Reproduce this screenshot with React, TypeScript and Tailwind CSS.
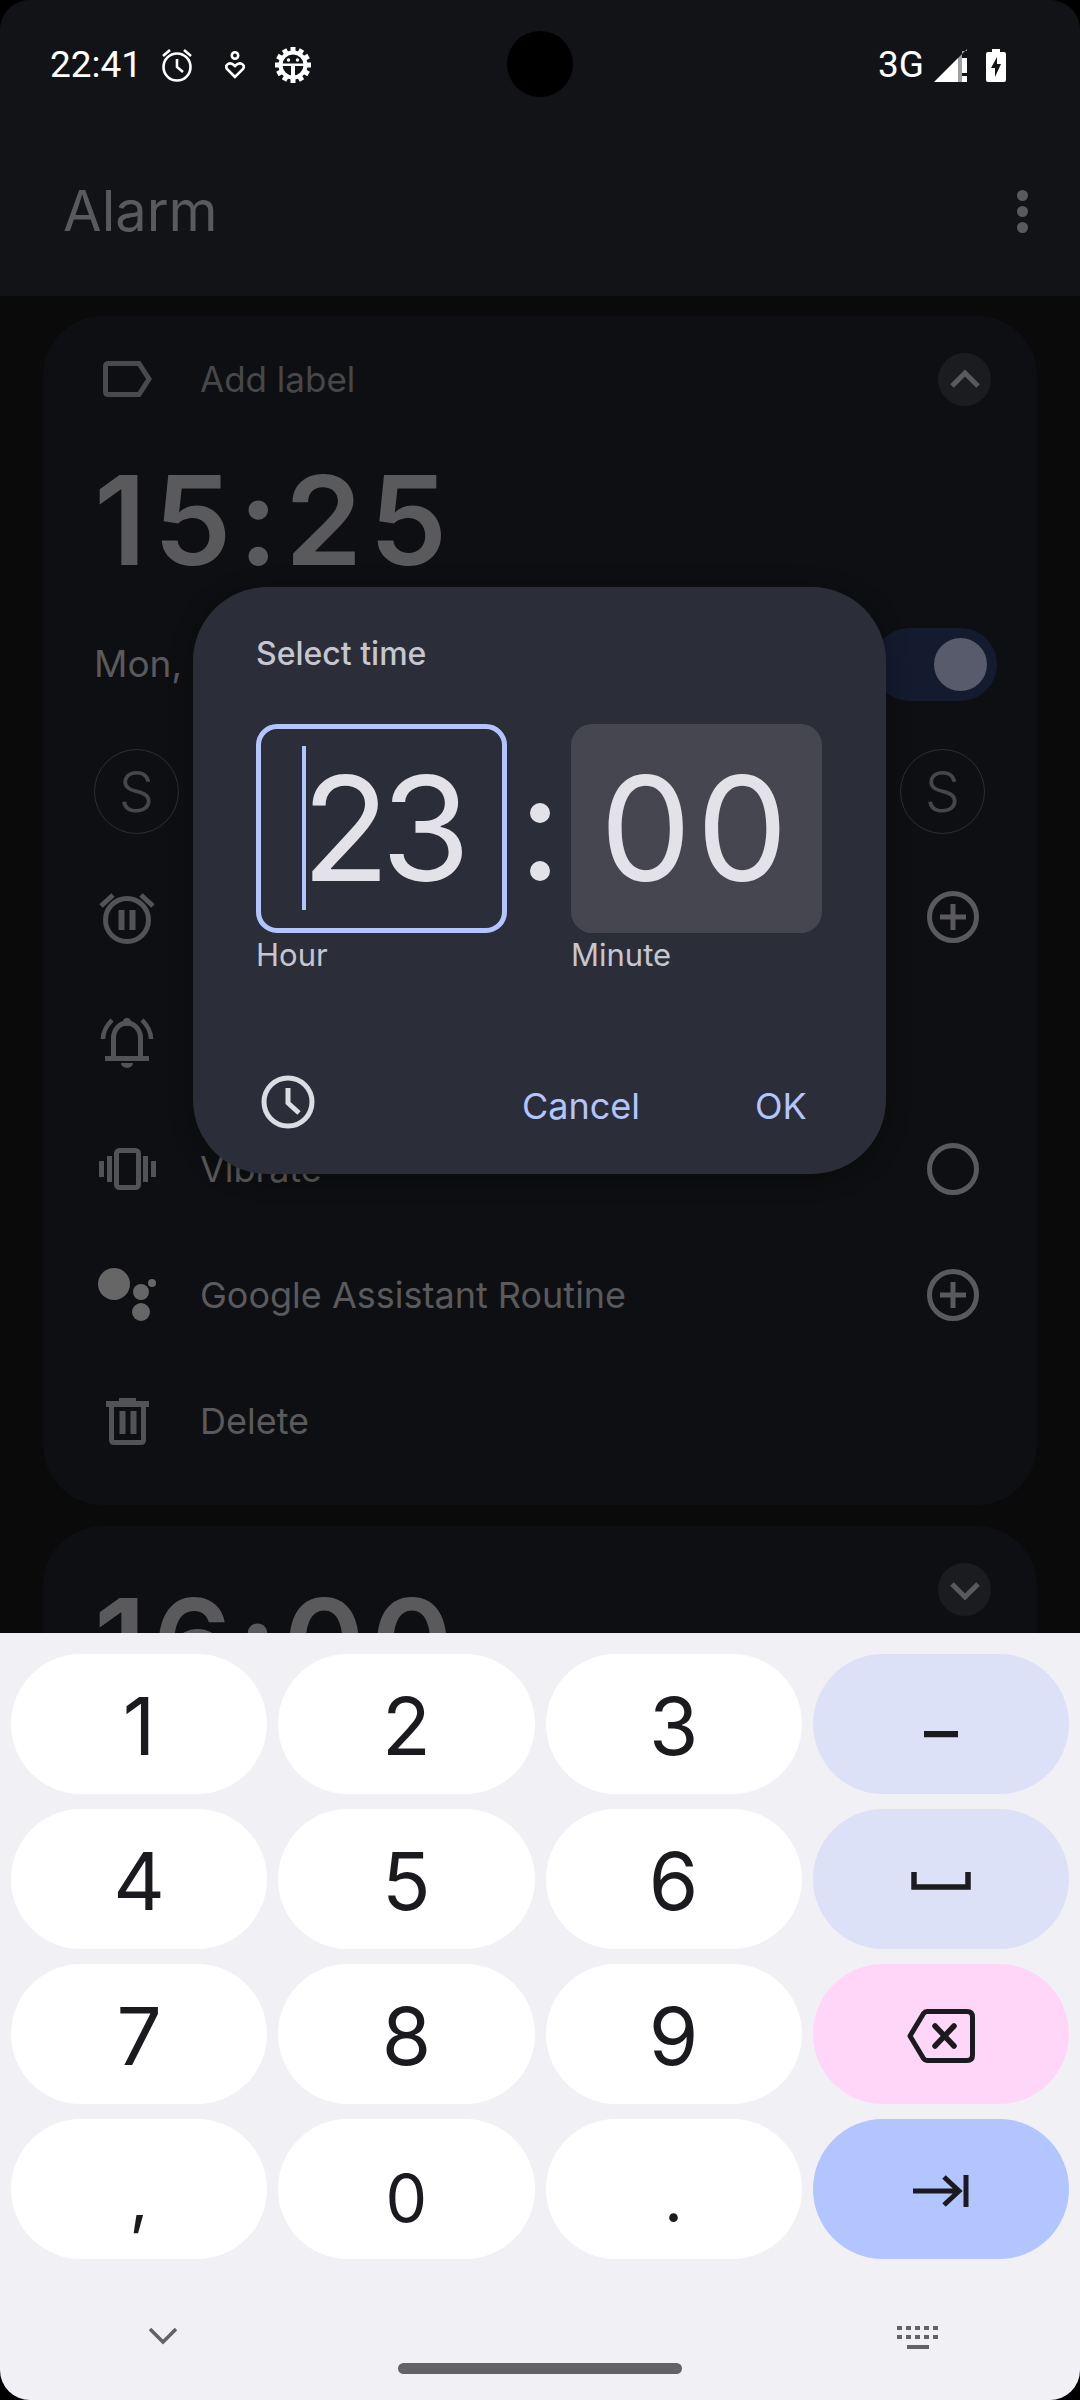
const SANS = "font-['Inter','Liberation_Sans',sans-serif]";

function Chev({ up }: { up?: boolean }) {
  return (
    <div className="w-[53px] h-[53px] rounded-full bg-[#1b1c1f] flex items-center justify-center">
      <svg width="32" height="32" viewBox="0 0 32 32" fill="none" stroke="#5a5a5c" strokeWidth="5">
        <path d={up ? "M3 23 L16 10 L29 23" : "M3 10 L16 23 L29 10"} />
      </svg>
    </div>
  );
}

function Plus() {
  return (
    <svg width="54" height="54" viewBox="0 0 54 54" fill="none" stroke="#5a5a5c" strokeWidth="5">
      <circle cx="27" cy="27" r="23.5" />
      <path d="M27 14V40M14 27H40" />
    </svg>
  );
}

function Row({ icon, text, right }: { icon: React.ReactNode; text?: string; right?: React.ReactNode }) {
  return (
    <div className="h-[126px] flex items-center">
      <div className="w-[106px] flex justify-center pr-[40px] shrink-0">{icon}</div>
      <span className="text-[36px] text-[#5a5a5c] flex-1">{text}</span>
      <div className="w-[60px] shrink-0">{right}</div>
    </div>
  );
}

const Icons = {
  label: (
    <svg width="50" height="36" viewBox="0 0 50 36" fill="none" stroke="#4a4a4c" strokeWidth="5">
      <path d="M2.500 5.500Q2.500 2.500 5.500 2.500H36L46 18L36 33.500H5.500Q2.500 33.500 2.500 30.500Z" />
    </svg>
  ),
  pause: (
    <svg width="56" height="54" viewBox="0 0 56 54" fill="none" stroke="#535357" strokeWidth="5">
      <circle cx="28" cy="30" r="21.500" />
      <path d="M22.500 20V40M33.500 20V40" strokeWidth="6" />
      <path d="M2 16L14 5M54 16L42 5" />
    </svg>
  ),
  bell: (
    <svg width="54" height="50" viewBox="0 0 54 50" fill="none" stroke="#535357" strokeWidth="5">
      <path d="M13.500 38V20a13.500 15 0 0 1 27 0V38" />
      <circle cx="27" cy="4" r="4" fill="#535357" stroke="none" />
      <rect x="5" y="38" width="44" height="5" fill="#535357" stroke="none" />
      <path d="M21 45h12a6 5 0 0 1-12 0z" fill="#535357" stroke="none" />
      <path d="M3 21C3 13 7 7 12 2M51 21C51 13 47 7 42 2" strokeWidth="4.500" />
    </svg>
  ),
  vibrate: (
    <svg width="57" height="42" viewBox="0 0 57 42" fill="#535357">
      <rect x="0" y="13" width="5" height="16" />
      <rect x="8" y="8" width="5" height="26" />
      <rect x="44" y="8" width="5" height="26" />
      <rect x="52" y="13" width="5" height="16" />
      <rect x="17.500" y="2.500" width="22" height="37" rx="3" fill="none" stroke="#535357" strokeWidth="5" />
    </svg>
  ),
  assistant: (
    <svg width="58" height="54" viewBox="0 0 58 54" fill="#666667">
      <circle cx="16" cy="16" r="16" />
      <circle cx="43" cy="24" r="8" />
      <circle cx="54" cy="15" r="4" />
      <circle cx="43" cy="44" r="9" />
    </svg>
  ),
  trash: (
    <svg width="43" height="47" viewBox="0 0 43 47" fill="#535357">
      <rect x="0" y="3" width="43" height="6" />
      <rect x="13" y="0" width="17" height="4" />
      <path d="M5.500 9V42Q5.500 44.500 8 44.500H35Q37.500 44.500 37.500 42V9" fill="none" stroke="#535357" strokeWidth="5" />
      <rect x="13.500" y="13" width="6" height="23" />
      <rect x="24.500" y="13" width="6" height="23" />
    </svg>
  ),
};

function Card1() {
  const days = ["S", "M", "T", "W", "T", "F", "S"];
  return (
    <div className="h-[1189px] rounded-[60px] bg-[#0e0f12] shrink-0 flex flex-col px-[51px]">
      <div className="h-[126px] flex items-center shrink-0">
        <div className="w-[106px] pl-[9px]">{Icons.label}</div>
        <span className="text-[35px] text-[#47474a] flex-1">Add label</span>
        <div className="mr-[-5px]"><Chev up /></div>
      </div>
      <div className="h-[156px] flex items-center shrink-0 text-[124px] leading-none font-semibold text-[#5a5a5c] tracking-[7px]">15:25</div>
      <div className="h-[132px] flex items-center justify-between shrink-0">
        <span className="text-[37px] text-[#5a5a5c]">Mon, Tue, Wed, Thu, Fri</span>
        <div className="w-[124px] h-[73px] rounded-full bg-[#141b2e] flex items-center justify-end pr-[10px] mr-[-11px]">
          <div className="w-[53px] h-[53px] rounded-full bg-[#585b6b]" />
        </div>
      </div>
      <div className="flex justify-between mt-[19px] mb-[20px] shrink-0 mr-[1px]">
        {days.map((d, i) => (
          <div key={i} className="w-[85px] h-[85px] rounded-full border border-[#2e2e2f] flex items-center justify-center text-[56px] font-light text-[#47474a]">{d}</div>
        ))}
      </div>
      <Row icon={Icons.pause} right={<Plus />} />
      <Row icon={Icons.bell} />
      <Row icon={Icons.vibrate} text="Vibrate" right={
        <svg width="54" height="54" viewBox="0 0 54 54" fill="none" stroke="#5a5a5c" strokeWidth="5"><circle cx="27" cy="27" r="23.500" /></svg>
      } />
      <Row icon={Icons.assistant} text="Google Assistant Routine" right={<Plus />} />
      <Row icon={Icons.trash} text="Delete" />
    </div>
  );
}

function Dialog() {
  return (
    <div className="absolute left-[193px] top-[587px] w-[693px] h-[587px] rounded-[74px] bg-[#2b2e38] flex flex-col pl-[63px] pr-[64px] shadow-[0_4px_24px_rgba(0,0,0,0.3)]">
      <div className="h-[137px] flex items-end pb-[46px] text-[32px] font-medium text-[#c6c6d0]">Select time</div>
      <div className="flex items-center">
        <div className="w-[252px] h-[209px] rounded-[21px] border-[5px] border-[#b3c5ff] relative flex items-center justify-center text-[145px] leading-none text-[#e3e2e9] tracking-[-9px]">
          <div className="absolute left-[41px] top-[17px] w-[4px] h-[164px] bg-[#b3c5ff]" />
          <span>23</span>
        </div>
        <div className="w-[63px] flex flex-col items-center gap-[38px] ml-[1px] mt-[27px]">
          <div className="w-[20px] h-[20px] rounded-full bg-[#e3e2e9]" />
          <div className="w-[20px] h-[20px] rounded-full bg-[#e3e2e9]" />
        </div>
        <div className="w-[252px] h-[209px] rounded-[21px] bg-[#45464f] flex items-center justify-center text-[145px] leading-none text-[#e3e2e9] tracking-[5px]">00</div>
      </div>
      <div className="flex text-[31px] text-[#c6c6d0] mt-[-1px]">
        <span className="w-[315px]">Hour</span>
        <span>Minute</span>
      </div>
      <div className="flex items-center mt-[100px]">
        <svg className="ml-[5px] mt-[-8px]" width="54" height="54" viewBox="0 0 54 54" fill="none" stroke="#dcdce3" strokeWidth="5">
          <circle cx="27" cy="27" r="24" />
          <path d="M27 13V28L38 38" />
        </svg>
        <span className="ml-[207px] text-[36px] text-[#b3c5ff]">Cancel</span>
        <span className="ml-[115px] text-[36px] text-[#b3c5ff]">OK</span>
      </div>
    </div>
  );
}

function Key({ bg = "bg-white", children, small }: { bg?: string; children: React.ReactNode; small?: boolean }) {
  return (
    <div className={`h-[140px] rounded-[70px] flex items-center justify-center text-[#1b1b1f] ${bg} ${small ? "text-[66px] pt-[18px]" : "text-[80px] pt-[3px]"}`}>
      {children}
    </div>
  );
}

function Keyboard() {
  return (
    <div className="h-[767px] bg-[#f1f0f5] flex flex-col shrink-0 relative">
      <div className="grid grid-cols-4 gap-x-[11px] gap-y-[15px] px-[11px] pt-[21px]">
        {["1", "2", "3"].map((k) => <Key key={k}>{k}</Key>)}
        <Key bg="bg-[#dde1f8]"><span className="text-[68px] font-medium pt-[8px]">–</span></Key>
        {["4", "5", "6"].map((k) => <Key key={k}>{k}</Key>)}
        <Key bg="bg-[#dde1f8]">
          <svg width="60" height="18" viewBox="0 0 60 18" fill="none" stroke="#1b1b1f" strokeWidth="5.500"><path d="M3 0V15H57V0" /></svg>
        </Key>
        {["7", "8", "9"].map((k) => <Key key={k}>{k}</Key>)}
        <Key bg="bg-[#ffd6f8]">
          <svg width="68" height="54" viewBox="0 0 68 54" fill="none" stroke="#1b1b1f" strokeWidth="5" strokeLinejoin="round" strokeLinecap="round">
            <path d="M20 2.500H60Q65.500 2.500 65.500 8V46Q65.500 51.500 60 51.500H20Q18 51.500 16.500 49.500L3 27L16.500 4.500Q18 2.500 20 2.500Z" />
            <path d="M28 17L47 37M47 17L28 37" strokeWidth="5.500" />
          </svg>
        </Key>
        <Key small>,</Key>
        <Key small>0</Key>
        <Key small>.</Key>
        <Key bg="bg-[#b3c5ff]">
          <svg width="56" height="32" viewBox="0 0 56 32" fill="none" stroke="#1b1b1f" strokeWidth="5">
            <path d="M0 16H46M31 2L46 16L31 30M53 0V32" />
          </svg>
        </Key>
      </div>
      <div className="absolute left-[149px] top-[694px]">
        <svg width="28" height="18" viewBox="0 0 28 18" fill="none" stroke="#636366" strokeWidth="3.500"><path d="M1 2L14 15L27 2" /></svg>
      </div>
      <div className="absolute left-[897px] top-[693px]">
        <svg width="42" height="24" viewBox="0 0 42 24" fill="#636366">
          {[0, 9, 18, 27, 36].map((x) => <rect key={x} x={x} y="0" width="5" height="4" />)}
          {[0, 9, 18, 27, 36].map((x) => <rect key={x} x={x} y="9" width="5" height="4" />)}
          <rect x="10" y="19" width="22" height="4" />
        </svg>
      </div>
      <div className="absolute left-[398px] top-[730px] w-[284px] h-[11px] rounded-full bg-[#636366]" />
    </div>
  );
}

function StatusBar() {
  return (
    <div className="h-[130px] flex items-center pl-[50px] pr-[74px] text-white font-['Roboto',sans-serif] text-[37px]">
      <span className="w-[111px]">22:41</span>
      <svg width="32" height="34" viewBox="0 0 32 34" fill="none" stroke="white" strokeWidth="2.600">
        <circle cx="16" cy="19" r="13.500" />
        <path d="M16 11V19L22 24M2 8L9 2M30 8L23 2" />
      </svg>
      <svg className="ml-[32px]" width="20" height="28" viewBox="0 0 20 28" fill="none" stroke="white" strokeWidth="2.600">
        <circle cx="10" cy="4.500" r="3.200" />
        <path d="M10 26L2 18Q0 15 3 13Q6 11 10 15Q14 11 17 13Q20 15 18 18Z" />
      </svg>
      <svg className="ml-[30px]" width="36" height="36" viewBox="0 0 36 36" fill="white">
        {[0, 30, 60, 90, 120, 150, 180, 210, 240, 270, 300, 330].map((a) => (
          <rect key={a} x="15.500" y="0" width="5" height="6" transform={`rotate(${a} 18 18)`} />
        ))}
        <circle cx="18" cy="18" r="12.500" fill="none" stroke="white" strokeWidth="4" />
        <circle cx="13.500" cy="13" r="1.700" />
        <circle cx="22.500" cy="13" r="1.700" />
        <path d="M6 16.500h24v2.500H20v10h-4V19H6z" />
      </svg>
      <span className="ml-auto">3G</span>
      <svg className="ml-[10px]" width="33" height="33" viewBox="0 0 33 33" fill="white">
        <path d="M0 33L24 9V33Z" />
        <path d="M24 9L33 0V2H28V33H24Z" opacity="0.6" />
        <rect x="28" y="9" width="5" height="15" />
        <rect x="28" y="27" width="5" height="6" />
      </svg>
      <svg className="ml-[19px]" width="20" height="33" viewBox="0 0 20 33" fill="white">
        <path fillRule="evenodd" d="M6 0H14V3H18Q20 3 20 5V31Q20 33 18 33H2Q0 33 0 31V5Q0 3 2 3H6ZM11 8L5 19H9V28L15 15H11Z" />
      </svg>
    </div>
  );
}

export default function App() {
  return (
    <div className="relative w-[1080px] h-[2400px] bg-black overflow-hidden">
      <div className={`relative w-[1080px] h-[2400px] rounded-[30px] overflow-hidden flex flex-col bg-[#0a0a0b] ${SANS}`}>
        <div className="h-[296px] bg-[#121317] shrink-0 flex flex-col">
          <StatusBar />
          <div className="flex items-center justify-between pl-[63px] pr-[52px] mt-[39px]">
            <span className="text-[56px] text-[#5a5a5c]">Alarm</span>
            <div className="flex flex-col gap-[5px]">
              {[0, 1, 2].map((i) => <div key={i} className="w-[11px] h-[11px] rounded-full bg-[#5a5a5c]" />)}
            </div>
          </div>
        </div>
        <div className="flex-1 overflow-hidden px-[43px] pt-[20px] flex flex-col gap-[21px]">
          <Card1 />
          <div className="h-[300px] shrink-0 rounded-[60px] bg-[#0e0f12] px-[51px] relative">
            <div className="absolute right-[46px] top-[37px]"><Chev /></div>
            <div className="pt-[55px] text-[124px] leading-none font-semibold text-[#5a5a5c] tracking-[6px]">16:00</div>
          </div>
        </div>
        <Keyboard />
        <Dialog />
        <div className="absolute left-[507px] top-[31px] w-[66px] h-[66px] rounded-full bg-black" />
      </div>
    </div>
  );
}
